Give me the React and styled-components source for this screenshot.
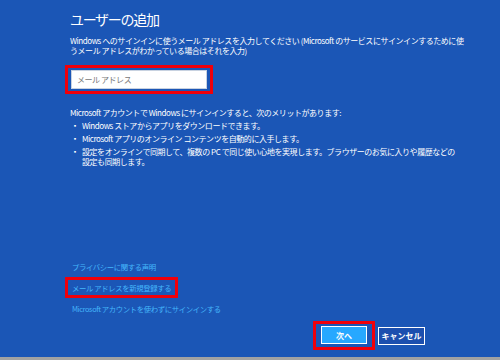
import React from "react";
import styled, { createGlobalStyle } from "styled-components";

const Global = createGlobalStyle`
  html, body { margin: 0; padding: 0; }
  body { font-family: "Noto Sans CJK JP", "Noto Sans", sans-serif; }
`;

const Page = styled.div`
  width: 500px;
  height: 360px;
  background: #1b56b6;
  display: flex;
  flex-direction: column;
  color: #fff;
  overflow: hidden;
`;

const Content = styled.div`
  flex: 1;
  display: flex;
  flex-direction: column;
  padding: 9px 0 0 70px;
`;

const Title = styled.h1`
  margin: 0;
  font-size: 14px;
  line-height: 20px;
  font-weight: 400;
  letter-spacing: -1.3px;
`;

const Text = styled.p`
  margin: ${(p) => p.$mt || 0}px 0 0;
  font-size: 8px;
  line-height: 10px;
  white-space: nowrap;
  letter-spacing: -0.45px;
`;

const InputFrame = styled.div`
  margin: 9px 0 0 -5px;
  width: 142px;
  height: 23px;
  border: 3px solid #f0000a;
  display: flex;
  align-items: center;
  justify-content: center;
`;

const Input = styled.div`
  width: 136px;
  height: 19px;
  background: #fff;
  border: 1px solid #c8d2e0;
  box-sizing: border-box;
  font-size: 8px;
  color: #777;
  padding-left: 5px;
  display: flex;
  align-items: center;
  letter-spacing: -0.45px;
`;

const List = styled.ul`
  margin: 3px 0 0;
  padding: 0;
  list-style: none;
  display: flex;
  flex-direction: column;
  gap: 3px;
`;

const Item = styled.li`
  display: flex;
  font-size: 8px;
  line-height: 10px;
  letter-spacing: -0.45px;
  white-space: nowrap;
  &::before {
    content: "▪";
    width: 10px;
    flex: none;
    padding-left: 2px;
    font-size: 6px;
  }
`;

const Links = styled.div`
  margin-top: auto;
  display: flex;
  flex-direction: column;
  align-items: flex-start;
  gap: 10px;
  margin-bottom: 7px;
`;

const LinkText = styled.a`
  font-size: 7.4px;
  line-height: 11px;
  color: #45b6fb;
  letter-spacing: -0.4px;
  text-decoration: none;
  display: inline-block;
  padding-left: 2px;
  ${(p) =>
    p.$boxed &&
    `border: 3px solid #f0000a; margin: -5px 0 -5px -5px; padding: 2px 4px 2px 4px;`}
`;

const Footer = styled.div`
  display: flex;
  justify-content: flex-end;
  align-items: center;
  gap: 3px;
  padding-right: 75px;
  margin-bottom: 7px;
`;

const HiFrame = styled.div`
  border: 3px solid #f0000a;
  padding: 2px 5px 3px;
`;

const Button = styled.button`
  font-family: inherit;
  font-size: 8px;
  font-weight: 700;
  color: #fff;
  width: ${(p) => p.$w}px;
  height: 18px;
  border: 1px solid #fff;
  background: ${(p) => (p.$primary ? "#27a8ff" : "#1c4fae")};
  padding: 0;
  display: block;
`;

const Bottom = styled.div`
  height: 3px;
  background: #a2a2a2;
`;

export default function App() {
  return (
    <Page>
      <Global />
      <Content>
        <Title>ユーザーの追加</Title>
        <Text $mt={7}>
          Windows へのサインインに使うメール アドレスを入力してください (Microsoft のサービスにサインインするために使
          <br />
          うメール アドレスがわかっている場合はそれを入力)
        </Text>
        <InputFrame>
          <Input>メール アドレス</Input>
        </InputFrame>
        <Text $mt={14}>Microsoft アカウントで Windows にサインインすると、次のメリットがあります:</Text>
        <List>
          <Item>Windows ストアからアプリをダウンロードできます。</Item>
          <Item>Microsoft アプリのオンライン コンテンツを自動的に入手します。</Item>
          <Item>
            <span>
              設定をオンラインで同期して、複数の PC で同じ使い心地を実現します。ブラウザーのお気に入りや履歴などの
              <br />
              設定も同期します。
            </span>
          </Item>
        </List>
        <Links>
          <LinkText href="#">プライバシーに関する声明</LinkText>
          <LinkText href="#" $boxed>
            メール アドレスを新規登録する
          </LinkText>
          <LinkText href="#">Microsoft アカウントを使わずにサインインする</LinkText>
        </Links>
      </Content>
      <Footer>
        <HiFrame>
          <Button $primary $w={46}>
            次へ
          </Button>
        </HiFrame>
        <Button $w={47}>キャンセル</Button>
      </Footer>
      <Bottom />
    </Page>
  );
}
